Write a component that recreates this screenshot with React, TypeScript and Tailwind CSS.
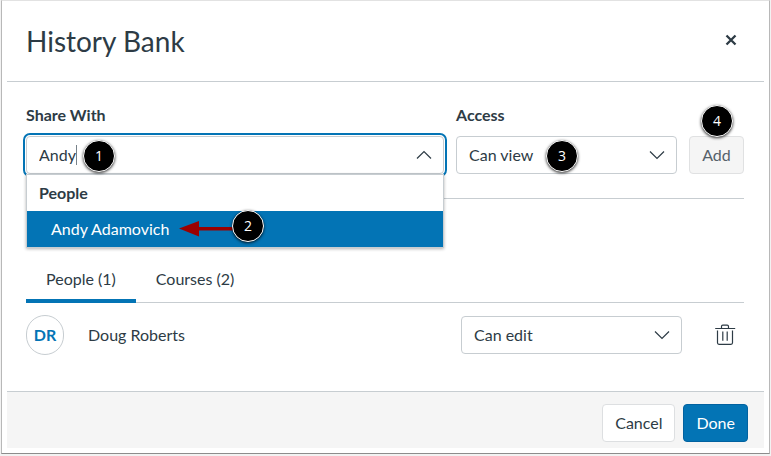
import React, { useState } from 'react';

interface ChevronProps {
  up?: boolean;
}

function Chevron({ up = false }: ChevronProps) {
  return (
    <svg
      className="pointer-events-none absolute top-1/2 right-3 h-4 w-4 -translate-y-1/2"
      fill="none"
      stroke="#2d3b45"
      strokeWidth={1.2}
      viewBox="0 0 16 16"
      aria-hidden="true"
    >
      <path d={up ? 'M1 11.5L8 4.5L15 11.5' : 'M1 4.5L8 11.5L15 4.5'} />
    </svg>
  );
}

interface AccessSelectProps {
  id: string;
  initial: string;
  label?: string;
}

function AccessSelect({ id, initial, label }: AccessSelectProps) {
  const [value, setValue] = useState(initial);

  return (
    <div className="relative">
      <select
        id={id}
        aria-label={label}
        value={value}
        onChange={(e) => setValue(e.target.value)}
        className="block h-[38px] w-full appearance-none rounded border border-[#c7cdd1] bg-white px-3 text-base outline-none"
      >
        <option value="view">Can view</option>
        <option value="edit">Can edit</option>
      </select>
      <Chevron />
    </div>
  );
}

interface StepProps {
  n: number;
  className: string;
}

// Numbered callout that sits over the control it explains
function Step({ n, className }: StepProps) {
  return (
    <span
      className={`pointer-events-none absolute z-20 flex h-8 w-8 items-center justify-center rounded-full border border-white bg-black font-['Open_Sans',sans-serif] text-sm text-white shadow-[0_1px_3px_rgba(0,0,0,0.8)] ${className}`}
    >
      {n}
    </span>
  );
}

const tabs = [
  { id: 'people', label: 'People (1)' },
  { id: 'courses', label: 'Courses (2)' },
];

export default function App() {
  const [query, setQuery] = useState('Andy');
  const [tab, setTab] = useState('people');

  return (
    <div className="bg-[#f2f2f2] px-px pb-0.5 font-['Lato',sans-serif] text-base text-[#2d3b45]">
      <div
        role="dialog"
        aria-labelledby="bank-title"
        className="border border-t-[#e2e2e2] border-r-[#b8b8b8] border-b-[#8c8c8c] border-l-[#b8b8b8] bg-white px-[5px] pb-[5px]"
      >
        {/* Header */}
        <header className="flex h-[81px] items-center justify-between border-b border-[#c7cdd1] pr-[26px] pl-[19px]">
          <h1 id="bank-title" className="text-[28px] leading-9">
            History Bank
          </h1>
          <button type="button" aria-label="Close">
            <svg className="h-3.5 w-3.5" viewBox="0 0 14 14" fill="none" stroke="currentColor" strokeWidth={2.3}>
              <path d="M2.5 1.5L11.5 10.5M11.5 1.5L2.5 10.5" />
            </svg>
          </button>
        </header>

        <main className="pt-[21px] pr-5 pb-9 pl-[19px]">
          <form className="flex items-end gap-3 border-b border-[#c7cdd1] pb-6" onSubmit={(e) => e.preventDefault()}>
            <div className="flex-1">
              <label htmlFor="share-with" className="mb-[9px] block leading-6 font-bold">
                Share With
              </label>
              <div className="relative">
                <input
                  id="share-with"
                  type="text"
                  role="combobox"
                  aria-expanded="true"
                  aria-controls="share-options"
                  autoComplete="off"
                  value={query}
                  onChange={(e) => setQuery(e.target.value)}
                  className="block h-[38px] w-full rounded border border-[#c7cdd1] bg-white px-3 pb-0.5 text-base outline-2 outline-offset-1 outline-[#0374b5]"
                />
                <span className="absolute top-[9px] left-[50px] h-5 w-px bg-[#77828a]" />
                <Chevron up />
                <Step n={1} className="top-1 left-[57px]" />
                <ul
                  id="share-options"
                  role="listbox"
                  aria-label="People"
                  className="absolute top-full right-0 left-0 z-10 border border-[#c7cdd1] bg-white leading-9 shadow-[0_1px_3px_rgba(0,0,0,0.3)]"
                >
                  <li role="presentation" className="px-3 font-bold">
                    People
                  </li>
                  <li role="option" aria-selected="true" className="relative bg-[#0374b5] px-6 text-white">
                    Andy Adamovich
                    <svg className="absolute top-2.5 left-[152px] h-4 w-14" viewBox="0 0 56 16" fill="#9b0000" aria-hidden="true">
                      <path d="M0 7.5L20 0V6H56V9.5H20V15.5Z" />
                    </svg>
                    <Step n={2} className="-top-px left-[205px]" />
                  </li>
                </ul>
              </div>
            </div>

            <div className="relative w-[221px]">
              <label htmlFor="access" className="mb-[9px] block leading-6 font-bold">
                Access
              </label>
              <AccessSelect id="access" initial="view" />
              <Step n={3} className="right-[99px] bottom-0.5" />
            </div>

            <div className="relative">
              <button
                type="submit"
                className="h-[38px] w-[55px] rounded border border-[#e0e1e2] bg-[#f5f5f5] text-[#56616a]"
              >
                Add
              </button>
              <Step n={4} className="-top-[31px] left-3" />
            </div>
          </form>

          {/* Existing shares */}
          <div role="tablist" className="mt-14 flex border-b border-[#c7cdd1]">
            {tabs.map((t) => (
              <button
                key={t.id}
                type="button"
                role="tab"
                aria-selected={t.id === tab}
                onClick={() => setTab(t.id)}
                className={[
                  '-mb-px border-b-4 px-5 pt-3 pb-2 leading-6',
                  t.id === tab ? 'border-[#0374b5]' : 'border-transparent',
                ].join(' ')}
              >
                {t.label}
              </button>
            ))}
          </div>

          <div className="mt-3 flex items-center">
            <span className="flex h-10 w-[38px] items-center justify-center rounded-full border border-[#c7cdd1] font-bold text-[#0374b5]">
              DR
            </span>
            <span className="ml-6 flex-1">Doug Roberts</span>
            <div className="w-[221px]">
              <AccessSelect id="doug-access" initial="edit" label="Access for Doug Roberts" />
            </div>
            <button type="button" aria-label="Remove Doug Roberts" className="mr-2 ml-8">
              <svg className="h-[22px] w-[22px]" viewBox="0 0 22 22" fill="none" stroke="currentColor" strokeWidth={1.2}>
                <path d="M1.2 4.5H21.2M7.5 4.5V2.5Q7.5 1.2 8.8 1.2H13.2Q14.5 1.2 14.5 2.5V4.5M3.5 6.5V18.8Q3.5 20.3 5 20.3H17Q18.5 20.3 18.5 18.8V6.5M8.8 7.5V16.8M13.2 7.5V16.8" />
              </svg>
            </button>
          </div>
        </main>

        <footer className="flex justify-end gap-2 border-t border-[#c7cdd1] bg-[#f5f5f5] pt-3 pr-4 pb-1.5">
          <button type="button" className="h-[38px] rounded border border-[#dddfe1] bg-white px-3">
            Cancel
          </button>
          <button type="button" className="h-[38px] rounded border border-[#0262a0] bg-[#0374b5] px-3 text-white">
            Done
          </button>
        </footer>
      </div>
    </div>
  );
}
